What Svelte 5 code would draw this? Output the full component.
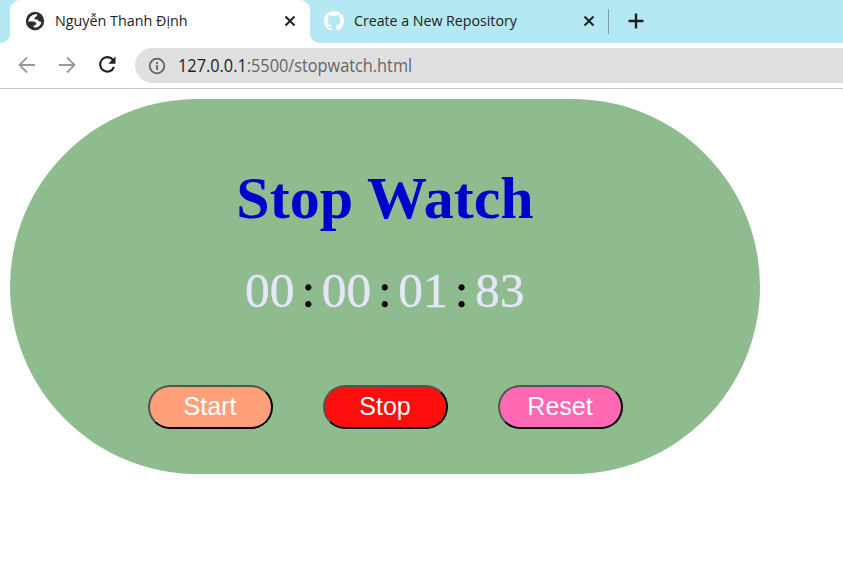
<script>
  const digits = ['00', '00', '01', '83'];
  const buttons = [
    { label: 'Start', cls: 'start' },
    { label: 'Stop', cls: 'stop' },
    { label: 'Reset', cls: 'reset' }
  ];
</script>

<div class="window">
  <header class="tabs">
    <div class="tab active">
      <svg class="fav" viewBox="0 0 20 20"><circle cx="10" cy="10" r="9.2" fill="#2b2d31" /><path d="M7.4 4.2c1.6-.9 3.4-1.1 5-.6l-.6 1.7-2 .9-.3 2 3.2.5 1 1.6 2.6.6c-.3 3-2.6 5.3-5.8 5.6l-2-.2.3-1.8 2.3-.8.3-1.6-1.7-1.4-4.7-.5-1.6 1c-.1-3 1.3-5.5 4-7z" fill="#fff" /></svg>
      <span class="label first">Nguyễn Thanh Định</span>
      <svg class="close" viewBox="0 0 12 12"><path d="M1.5 1.5l9 9M10.5 1.5l-9 9" /></svg>
    </div>
    <div class="tab second">
      <svg class="fav" viewBox="0 0 16 16"><path fill="#fff" d="M8 0C3.58 0 0 3.58 0 8c0 3.54 2.29 6.53 5.47 7.59.4.07.55-.17.55-.38 0-.19-.01-.82-.01-1.49-2.01.37-2.53-.49-2.69-.94-.09-.23-.48-.94-.82-1.13-.28-.15-.68-.52-.01-.53.63-.01 1.08.58 1.23.82.72 1.21 1.87.87 2.33.66.07-.52.28-.87.51-1.07-1.78-.2-3.64-.89-3.64-3.95 0-.87.31-1.59.82-2.15-.08-.2-.36-1.02.08-2.12 0 0 .67-.21 2.2.82.64-.18 1.32-.27 2-.27s1.36.09 2 .27c1.53-1.04 2.2-.82 2.2-.82.44 1.1.16 1.92.08 2.12.51.56.82 1.27.82 2.15 0 3.07-1.87 3.75-3.65 3.95.29.25.54.73.54 1.48 0 1.07-.01 1.93-.01 2.2 0 .21.15.46.55.38A8.01 8.01 0 0 0 16 8c0-4.42-3.58-8-8-8z" /></svg>
      <span class="label other">Create a New Repository</span>
      <svg class="close" viewBox="0 0 12 12"><path d="M1.5 1.5l9 9M10.5 1.5l-9 9" /></svg>
    </div>
    <i class="divider"></i>
    <svg class="plus" viewBox="0 0 16 16"><path d="M8 .5v15M.5 8h15" /></svg>
  </header>
  <nav class="toolbar">
    <svg class="nav" viewBox="0 0 20 20"><path d="M18 10H3M10 2.5L2.5 10l7.5 7.5" /></svg>
    <svg class="nav" viewBox="0 0 20 20"><path d="M2 10h15M10 2.5l7.5 7.5-7.5 7.5" /></svg>
    <svg class="nav reload" viewBox="0 0 20 20"><path d="M16.2 5.2A7.2 7.2 0 1 0 17 12" /><path class="head" d="M18.5 1.5v7.2h-7.2z" /></svg>
    <div class="address">
      <svg class="info" viewBox="0 0 18 18"><circle cx="9" cy="9" r="7.3" /><path d="M9 8v5M9 5v2" /></svg>
      <span class="url"><b>127.0.0.1</b>:5500/stopwatch.html</span>
    </div>
  </nav>
  <main>
    <section class="panel">
      <h1>Stop Watch</h1>
      <div class="time">
        {#each digits as d, i}
          {#if i > 0}<span class="colon">:</span>{/if}
          <span class="num">{d}</span>
        {/each}
      </div>
      <div class="buttons">
        {#each buttons as b}
          <button class={b.cls}>{b.label}</button>
        {/each}
      </div>
    </section>
  </main>
</div>

<style>
  :global(body) { margin: 0; background: #fff; }
  .window { width: 843px; height: 564px; overflow: hidden; background: #fff; }
  svg { display: block; flex: none; }
  .tabs { display: flex; height: 43px; background: #b4e8f3; align-items: stretch; }
  .tab { display: flex; align-items: center; box-sizing: border-box; font: 15px/20px "Open Sans", "Noto Sans", sans-serif; color: #202124; }
  .active { position: relative; width: 300px; margin-left: 10px; padding: 0 14px 1px 15px; background: #fff; border-radius: 10px 10px 0 0; }
  .active::before, .active::after { content: ""; position: absolute; bottom: 0; width: 10px; height: 10px; }
  .active::before { left: -10px; background: radial-gradient(circle at 0 0, #b4e8f3 9.5px, #fff 10.5px); }
  .active::after { right: -10px; background: radial-gradient(circle at 100% 0, #b4e8f3 9.5px, #fff 10.5px); }
  .second { width: 298px; padding: 0 13px 1px 14px; }
  .fav { width: 20px; height: 20px; }
  .label { margin-left: 10px; padding-bottom: 2px; white-space: nowrap; transform-origin: 0 50%; flex: 1; min-width: 0; }
  .first { transform: scaleX(.955); }
  .other { transform: scaleX(.945); }
  .close { width: 12px; height: 12px; fill: none; stroke: #202124; stroke-width: 2; }
  .divider { width: 1px; height: 25px; margin-top: 9px; background: #7c9da5; }
  .plus { width: 16px; height: 16px; margin: 13px 0 0 19px; fill: none; stroke: #202124; stroke-width: 2.4; }
  .toolbar { display: flex; align-items: center; height: 45px; border-bottom: 1px solid #c8c8c8; padding-left: 17px; gap: 20px; }
  .nav { width: 20px; height: 20px; margin-bottom: 1px; fill: none; stroke: #999; stroke-width: 1.8; }
  .reload { stroke: #202124; stroke-width: 2.1; }
  .head { fill: #202124; stroke: none; }
  .address { display: flex; align-items: center; flex: 1; height: 35px; margin-left: -2px; border-radius: 18px 0 0 18px; background: #e0e0e0; padding-left: 13px; }
  .info { width: 18px; height: 18px; fill: none; stroke: #5f6368; stroke-width: 1.8; }
  .url { margin-left: 12px; padding-bottom: 2px; font: 18px/24px "Open Sans", "Noto Sans", sans-serif; color: #63666a; white-space: nowrap; transform: scaleX(.905); transform-origin: 0 50%; }
  .url b { color: #202124; font-weight: 400; }
  main { padding: 10px; }
  .panel { box-sizing: border-box; width: 750px; height: 375px; padding-top: 64px; border-radius: 188px; background: #8fbc8f; font-family: "Liberation Serif", serif; }
  h1 { margin: 0; font-size: 60px; line-height: 70px; font-weight: 700; color: #0000cd; text-align: center; }
  .time { display: flex; justify-content: center; margin-top: 30px; font-size: 49.5px; line-height: 56px; }
  .num { width: 50px; color: #e6e6fa; -webkit-text-stroke: .3px #e6e6fa; }
  .colon { width: 26.67px; text-align: center; color: #000; -webkit-text-stroke: .3px #000; }
  .buttons { display: flex; justify-content: center; gap: 50px; margin-top: 66px; }
  button { box-sizing: border-box; width: 125px; height: 44px; padding: 0 0 2px; border: 2px outset #000; border-radius: 25px; color: #fff; font: 25px/28px "Liberation Sans", Arial, sans-serif; }
  .start { background: #ffa07a; }
  .stop { background: #ff0d0d; }
  .reset { background: #ff69b4; }
</style>
